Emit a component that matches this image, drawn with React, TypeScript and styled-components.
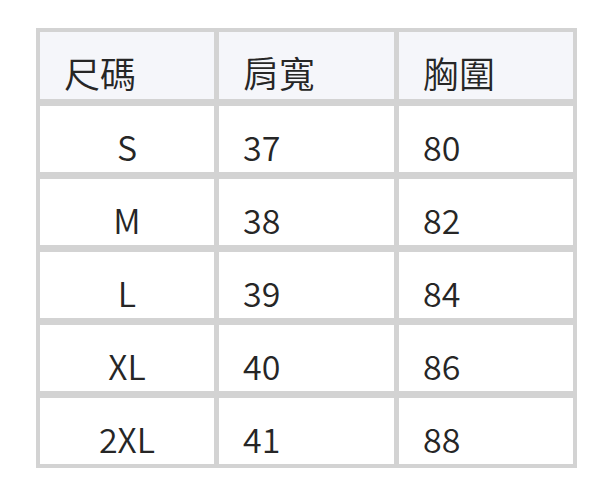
import React from "react";
import styled, { createGlobalStyle } from "styled-components";

const Global = createGlobalStyle`
  html, body { margin: 0; padding: 0; background: #ffffff; }
  body { font-family: "Noto Sans CJK TC", "Noto Sans", sans-serif; }
`;

const Page = styled.div`
  padding: 28px 0 0 36px;
`;

const Table = styled.div`
  display: grid;
  grid-template-columns: 174px 175px 174px;
  grid-template-rows: 67px repeat(5, 66px);
  column-gap: 5px;
  row-gap: 7px;
  padding: 4px;
  width: fit-content;
  background: #d3d3d3;
`;

const Cell = styled.div<{ $head?: boolean; $center?: boolean }>`
  display: flex;
  align-items: flex-end;
  justify-content: ${(p) => (p.$center ? "center" : "flex-start")};
  padding: 0 0 1px ${(p) => (p.$center ? "0" : "24px")};
  background: ${(p) => (p.$head ? "#f5f6fa" : "#ffffff")};
  color: #262626;
  font-size: ${(p) => (p.$head ? "36px" : "34px")};
  font-weight: 350;
  line-height: normal;
`;

const rows = [
  ["S", "37", "80"],
  ["M", "38", "82"],
  ["L", "39", "84"],
  ["XL", "40", "86"],
  ["2XL", "41", "88"],
];

export default function App() {
  return (
    <>
      <Global />
      <Page>
        <Table>
          <Cell $head>尺碼</Cell>
          <Cell $head>肩寬</Cell>
          <Cell $head>胸圍</Cell>
          {rows.map((r) => (
            <React.Fragment key={r[0]}>
              <Cell $center>{r[0]}</Cell>
              <Cell>{r[1]}</Cell>
              <Cell>{r[2]}</Cell>
            </React.Fragment>
          ))}
        </Table>
      </Page>
    </>
  );
}
